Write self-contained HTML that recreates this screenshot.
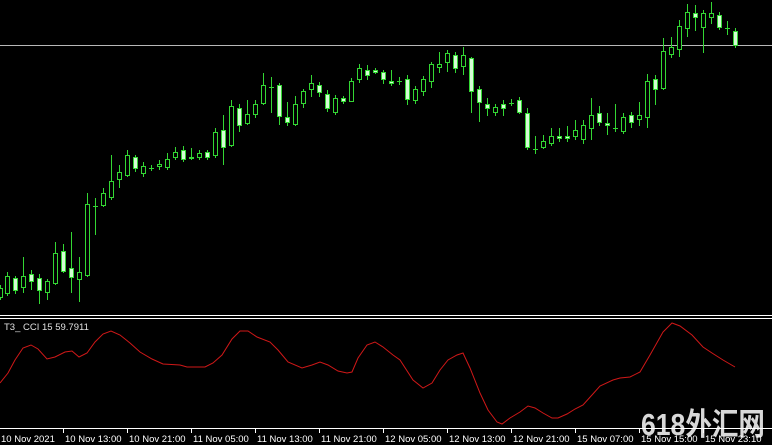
<!DOCTYPE html>
<html><head><meta charset="utf-8"><style>
html,body{margin:0;padding:0;background:#000;width:772px;height:445px;overflow:hidden}
svg{display:block}
</style></head><body>
<svg width="772" height="445" xmlns="http://www.w3.org/2000/svg" shape-rendering="crispEdges">
<rect width="772" height="445" fill="#000"/>
<rect x="0" y="45" width="772" height="1" fill="#b8b8b8"/>
<g id="candles"></g>
<rect x="0" y="315" width="772" height="1" fill="#fff"/>
<rect x="0" y="318" width="772" height="1" fill="#fff"/>
<text x="4" y="330" font-family="Liberation Sans, sans-serif" font-size="9.5" fill="#e0e0e0">T3_ CCI 15 59.7911</text>
<polyline shape-rendering="auto" fill="none" stroke="#d01818" stroke-width="1" points="0,383 8,373 15,360 23,348 31,345 38,349 47,359 55,357 65,352 72,351 79,357 87,353 95,342 103,334 111,331 120,335 130,343 140,352 152,359 163,364 180,365 187,367 205,367 213,363 222,355 232,339 240,331 248,331 257,337 270,342 278,350 288,362 302,368 312,365 320,362 328,365 338,371 347,373 352,372 358,358 367,345 375,342 383,347 393,355 400,360 413,380 423,388 432,383 440,370 448,360 457,355 463,353 470,368 480,393 488,410 497,422 502,424 510,418 520,412 528,406 535,408 543,413 552,418 558,418 567,414 575,409 583,405 592,395 600,386 613,380 620,378 630,377 640,372 650,355 663,332 672,323 680,326 692,335 703,347 712,353 723,360 735,367"/>
<text x="641" y="435" font-family="Liberation Sans, 'Noto Sans CJK SC', sans-serif" font-size="31" font-weight="bold" fill="#d8d8d8" textLength="124" lengthAdjust="spacingAndGlyphs">618外汇网</text>
<rect x="0" y="428" width="772" height="1" fill="#fff"/>
<g fill="#fff">
<rect x="63" y="428" width="1" height="5"/><rect x="127" y="428" width="1" height="5"/><rect x="191" y="428" width="1" height="5"/><rect x="255" y="428" width="1" height="5"/><rect x="319" y="428" width="1" height="5"/><rect x="383" y="428" width="1" height="5"/><rect x="447" y="428" width="1" height="5"/><rect x="511" y="428" width="1" height="5"/><rect x="575" y="428" width="1" height="5"/><rect x="639" y="428" width="1" height="5"/><rect x="703" y="428" width="1" height="5"/>
</g>
<g font-family="Liberation Sans, sans-serif" font-size="9.5" fill="#fff">
<text x="1" y="442">10 Nov 2021</text><text x="65" y="442">10 Nov 13:00</text><text x="129" y="442">10 Nov 21:00</text><text x="193" y="442">11 Nov 05:00</text><text x="257" y="442">11 Nov 13:00</text><text x="321" y="442">11 Nov 21:00</text><text x="385" y="442">12 Nov 05:00</text><text x="449" y="442">12 Nov 13:00</text><text x="513" y="442">12 Nov 21:00</text><text x="577" y="442">15 Nov 07:00</text><text x="641" y="442">15 Nov 15:00</text><text x="705" y="442">15 Nov 23:10</text>
</g>
</svg>
<script>
var d=[[0,288,297,285,300,0],[7,276,293,272,296,0],[15,278,290,276,294,1],[23,276,287,257,293,0],[31,274,281,270,290,1],[39,278,290,274,304,1],[47,281,292,279,300,0],[55,253,283,242,285,0],[63,251,271,244,273,1],[71,268,277,232,293,1],[79,272,279,257,302,0],[87,204,275,193,277,0],[95,206,206,198,235,0],[103,193,205,188,207,0],[111,181,197,155,200,0],[119,172,179,165,188,0],[127,155,175,150,177,0],[135,157,168,155,172,1],[143,166,173,162,177,0],[151,168,168,165,171,0],[159,164,166,160,170,0],[167,159,167,153,170,0],[175,152,157,147,160,0],[183,150,159,146,162,1],[191,157,158,148,160,1],[199,153,157,150,160,0],[207,152,157,150,160,1],[215,132,155,128,158,0],[223,130,147,115,165,1],[231,106,145,100,147,0],[239,108,125,104,132,1],[247,114,123,100,125,0],[255,104,114,100,118,0],[263,85,103,73,105,0],[271,87,87,77,113,0],[279,85,116,83,125,1],[287,117,122,102,126,1],[295,104,124,96,126,0],[303,91,103,89,108,0],[311,83,89,75,97,0],[319,85,92,82,97,1],[327,94,108,90,112,1],[335,98,112,95,115,0],[343,98,101,96,104,1],[351,81,101,78,102,0],[359,68,79,64,83,0],[367,70,75,65,80,1],[375,70,72,68,74,1],[383,72,79,70,84,1],[391,81,83,70,86,1],[399,81,81,77,85,0],[407,79,99,75,105,1],[415,89,100,86,104,0],[423,79,91,76,96,0],[431,64,81,62,88,0],[439,64,67,52,73,0],[447,53,62,50,72,0],[455,55,68,52,73,1],[463,55,66,47,75,0],[471,58,91,57,113,1],[479,89,102,86,122,1],[487,104,108,98,116,1],[495,107,112,104,116,0],[503,104,108,100,116,1],[511,103,103,99,106,0],[519,100,112,97,114,1],[527,113,147,108,150,1],[535,149,149,136,154,0],[543,141,147,135,149,0],[551,136,143,128,146,0],[559,136,138,128,142,1],[567,136,138,126,142,1],[575,130,136,120,140,0],[583,125,139,120,144,0],[591,115,128,98,140,0],[599,113,122,106,126,1],[607,123,125,113,135,1],[615,128,128,104,132,0],[623,117,131,113,134,0],[631,115,122,112,128,1],[639,115,119,102,126,0],[647,81,117,74,128,0],[655,79,89,75,105,1],[663,51,88,38,90,0],[671,47,54,37,58,0],[679,26,49,20,57,0],[687,12,28,4,37,0],[695,13,17,5,31,1],[703,13,27,10,53,0],[711,13,17,2,24,0],[719,15,27,12,30,1],[727,28,28,21,35,0],[735,31,45,28,48,1]];
var G='#33d633',s='';
function r(x,y,w,h,f){return '<rect x="'+x+'" y="'+y+'" width="'+w+'" height="'+h+'" fill="'+f+'"/>';}
d.forEach(function(c){var x=c[0];
s+=r(x,c[3],1,c[4]-c[3],G);
if(c[2]-c[1]<1){s+=r(x-2,c[1],5,1,G);}
else{var h=c[2]-c[1]+1;s+=r(x-2,c[1],5,h,G);if(h>2)s+=r(x-1,c[1]+1,3,h-2,c[5]?'#d4fcd4':'#000');}});
document.getElementById('candles').innerHTML=s;
</script>
</body></html>
